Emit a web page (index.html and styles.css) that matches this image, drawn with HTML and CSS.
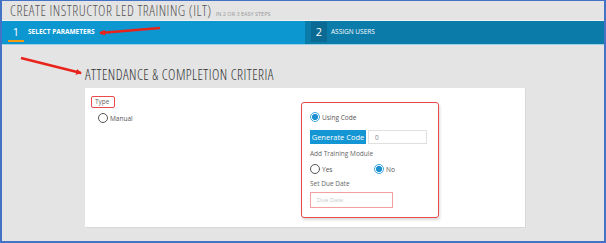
FILE: index.html
```html
<!DOCTYPE html>
<html>

<head>
  <title>Create Instructor Led Training</title>
  <link rel="stylesheet" href="styles.css">
</head>

<body>
  <div class="frame">
    <div class="page-header">
      <h1>CREATE INSTRUCTOR LED TRAINING (ILT)</h1>
      <span class="sub">IN 2 OR 3 EASY STEPS</span>
    </div>

    <div class="steps">
      <div class="step active">
        <span class="step-num">1</span>
        <span class="step-label">SELECT PARAMETERS</span>
      </div>
      <div class="step">
        <span class="step-num">2</span>
        <span class="step-label">ASSIGN USERS</span>
      </div>
    </div>

    <div class="content">
      <h2>ATTENDANCE &amp; COMPLETION CRITERIA</h2>

      <div class="card">
        <div class="col-left">
          <div class="field-label marked">Type</div>
          <label class="radio"><span class="dot"></span>Manual</label>
        </div>

        <div class="panel marked-panel">
          <label class="radio"><span class="dot checked"></span>Using Code</label>
          <div class="code-row">
            <button class="btn-generate">Generate Code</button>
            <input class="code-input" type="text" placeholder="0">
          </div>

          <div class="field-label">Add Training Module</div>
          <div class="radio-row">
            <label class="radio"><span class="dot"></span>Yes</label>
            <label class="radio"><span class="dot checked"></span>No</label>
          </div>

          <div class="field-label">Set Due Date</div>
          <input class="date-input" type="text" placeholder="Due Date">
        </div>
      </div>
    </div>

    <!-- annotation arrows -->
    <svg class="arrows" width="606" height="243" viewBox="0 0 606 243">
      <defs>
        <marker id="head" markerWidth="6" markerHeight="6" refX="5" refY="3" orient="auto" markerUnits="userSpaceOnUse">
          <path d="M0,0 L6,3 L0,6 Z" fill="#e8231c" />
        </marker>
      </defs>
      <line x1="160" y1="28" x2="100" y2="33" stroke="#e8231c" stroke-width="2.5" marker-end="url(#head)" />
      <line x1="21" y1="58" x2="81" y2="73" stroke="#e8231c" stroke-width="2.5" marker-end="url(#head)" />
    </svg>
  </div>
</body>

</html>
```

FILE: styles.css
```css
* {
  box-sizing: border-box;
}

body {
  margin: 0;
  font-family: "Open Sans", "Liberation Sans", sans-serif;
}

.frame {
  position: relative;
  width: 606px;
  height: 243px;
  border: 2px solid #4472c4;
  border-top-width: 1px;
  background-color: #e4e4e4;
  overflow: hidden;
}

.page-header {
  display: flex;
  align-items: baseline;
  gap: 4px;
  height: 20px;
  padding-left: 8px;
  border-bottom: 1px solid #f2f2f2;
}

.page-header h1 {
  margin: 0;
  font-size: 14px;
  font-weight: 300;
  font-stretch: 80%;
  line-height: 20px;
  color: #555;
  letter-spacing: 0.5px;
  white-space: nowrap;
}

.page-header .sub {
  font-size: 5.5px;
  color: #999;
  white-space: nowrap;
}

.steps {
  display: flex;
  height: 24px;
  border-bottom: 1px solid #9dd0e6;
}

.step {
  display: flex;
  align-items: flex-start;
  width: 301px;
  flex: none;
  padding-left: 6px;
  background-color: #0b7ba9;
}

.step + .step {
  flex: 1;
}

.step.active {
  width: 303px;
  background-color: #0d97d0;
}

.step-num {
  width: 16px;
  height: 20px;
  margin-top: 1px;
  font-size: 11px;
  line-height: 19px;
  text-align: center;
  color: #fff;
  background-color: #0a6a94;
}

.step.active .step-num {
  background-color: transparent;
  border-bottom: 2px solid #f39c12;
}

.step-label {
  margin-left: 4px;
  font-size: 6.5px;
  line-height: 21px;
  color: #fff;
}

.step.active .step-label {
  font-weight: 700;
}

.content {
  padding: 19px 0 0 83px;
}

.content h2 {
  margin: 0 0 2px 0;
  font-size: 14px;
  font-weight: 300;
  font-stretch: 85%;
  line-height: 22px;
  color: #333;
  letter-spacing: 0.45px;
  white-space: nowrap;
}

.card {
  display: flex;
  width: 440px;
  height: 139px;
  padding: 8px 0 0 6px;
  background-color: #fff;
  box-shadow: 1px 1px 0 #d8d8d8;
}

.col-left {
  width: 210px;
  flex: none;
}

.field-label {
  font-size: 6.5px;
  color: #666;
}

.field-label.marked {
  width: 24px;
  height: 12px;
  padding-left: 3px;
  line-height: 10px;
  border: 1.5px solid #e84a4c;
  border-radius: 2px;
}

.radio {
  display: flex;
  align-items: center;
  gap: 2px;
  font-size: 6.5px;
  color: #555;
  white-space: nowrap;
}

.col-left .radio {
  margin: 5px 0 0 7px;
}

.dot {
  width: 10px;
  height: 10px;
  flex: none;
  border: 1px solid #555;
  border-radius: 50%;
}

.dot.checked {
  border-color: #3aa6dd;
  background: radial-gradient(circle, #1b8fd0 0, #1b8fd0 2.8px, #fff 3.3px);
}

.panel {
  width: 138px;
  height: 116px;
  margin-top: 6px;
  padding: 9px 0 0 8px;
}

.marked-panel {
  border: 1.5px solid #e84a4c;
  border-radius: 3px;
  box-shadow: 1px 2px 3px rgba(0, 0, 0, 0.15);
}

.code-row {
  display: flex;
  gap: 2px;
  margin-top: 8px;
}

.btn-generate {
  width: 56px;
  height: 14px;
  padding: 0;
  border: none;
  font-family: inherit;
  font-size: 7.5px;
  line-height: 14px;
  white-space: nowrap;
  color: #fff;
  background-color: #1596d4;
}

.code-input {
  width: 59px;
  height: 14px;
  padding: 0 6px;
  font-family: inherit;
  font-size: 6.5px;
  border: 1px solid #e0e0e0;
}

.code-input::placeholder {
  color: #888;
}

.panel .field-label {
  margin-top: 5px;
  line-height: 9px;
}

.radio-row {
  display: flex;
  margin-top: 6px;
}

.radio-row .radio {
  width: 70px;
}

.date-input {
  display: block;
  width: 83px;
  height: 16px;
  margin-top: 4px;
  padding: 0 6px;
  font-family: inherit;
  font-size: 6px;
  border: 1px solid #f4a0a0;
}

.date-input::placeholder {
  color: #c8c8c8;
}

.arrows {
  position: absolute;
  left: -2px;
  top: -1px;
  pointer-events: none;
}
```
